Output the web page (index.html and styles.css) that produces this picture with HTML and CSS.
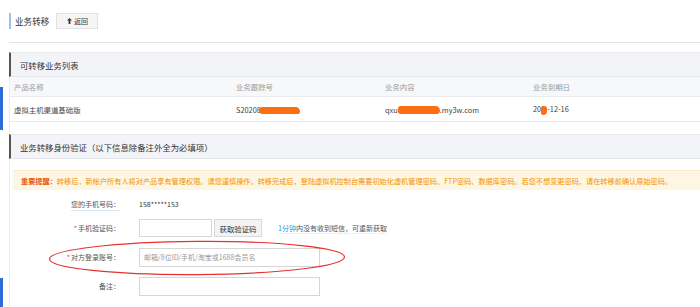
FILE: index.html
```html
<!DOCTYPE html>
<html>

<head>
    <meta charset="utf-8">
    <title>业务转移</title>
    <link rel="stylesheet" href="styles.css">
</head>

<body>
    <div class="layout">
        <div class="sidebar">
            <div class="nav-on nav-first"></div>
            <div class="nav-on nav-second"></div>
        </div>

        <div class="main">
            <!-- 页面标题 -->
            <div class="page-head">
                <span class="page-title">业务转移</span>
                <button class="back-btn">
                    <svg width="5" height="6" viewBox="0 0 5 6"><path d="M2.5 0 L5 2.6 L3.4 2.6 L3.4 6 L1.6 6 L1.6 2.6 L0 2.6 Z" fill="#333"/></svg>
                    返回
                </button>
            </div>

            <div class="content">
                <!-- 可转移业务列表 -->
                <div class="panel-title">可转移业务列表</div>
                <div class="biz-table">
                    <div class="biz-row biz-head">
                        <div>产品名称</div>
                        <div>业务跟踪号</div>
                        <div>业务内容</div>
                        <div>业务到期日</div>
                    </div>
                    <div class="biz-row">
                        <div>虚拟主机渠道基础版</div>
                        <div>S20208<span class="mask mask-id"></span></div>
                        <div>qxu<span class="mask mask-domain"></span>.my3w.com</div>
                        <div>20<span class="mask mask-date"></span>-12-16</div>
                    </div>
                </div>

                <!-- 身份验证 -->
                <div class="panel-title panel-second">业务转移身份验证（以下信息除备注外全为必填项）</div>
                <div class="notice">
                    <b>重要提醒：</b>转移后，新帐户所有人将对产品享有管理权限。请您谨慎操作。转移完成后，登陆虚拟机控制台需要初始化虚机管理密码、FTP密码、数据库密码。若您不想变更密码，请在转移前确认原始密码。
                </div>

                <div class="form">
                    <div class="form-row row-phone">
                        <label class="form-label"><span class="tip-line">您的手机号码：</span></label>
                        <span class="form-value">158*****153</span>
                    </div>
                    <div class="form-row">
                        <label class="form-label"><i class="req">*</i>手机验证码：</label>
                        <input class="form-input input-code" type="text">
                        <button class="code-btn">获取验证码</button>
                        <span class="code-tip"><em>1分钟</em>内没有收到短信，可重新获取</span>
                    </div>
                    <div class="form-row">
                        <label class="form-label"><i class="req">*</i>对方登录账号：</label>
                        <input class="form-input" type="text" placeholder="邮箱/8位ID/手机/淘宝或1688会员名">
                    </div>
                    <div class="form-row">
                        <label class="form-label">备注：</label>
                        <input class="form-input" type="text">
                    </div>
                </div>
            </div>
        </div>
    </div>

    <!-- 手绘红圈标注 -->
    <svg class="mark-circle" width="300" height="38" viewBox="0 0 300 38">
        <ellipse cx="149" cy="18" rx="147.5" ry="16.6" fill="none" stroke="#e63232" stroke-width="1.2" transform="rotate(-0.4 149 18)"/>
    </svg>
</body>

</html>
```

FILE: styles.css
```css
body {
    margin: 0;
    background: #fff;
    font-family: 'Noto Sans CJK SC', 'Noto Sans', sans-serif;
    color: #333;
    overflow: hidden;
}

.layout {
    display: flex;
    height: 307px;
}

.sidebar {
    width: 9px;
    flex-shrink: 0;
}

.nav-on {
    width: 3px;
    background-color: #2f6ad6;
}

.nav-first {
    margin-top: 87px;
    height: 43px;
}

.nav-second {
    margin-top: 148px;
    height: 29px;
}

.main {
    flex: 1;
}

.page-head {
    height: 43px;
    padding-top: 13px;
    box-sizing: border-box;
    border-bottom: 1px solid #e3e3e3;
    display: flex;
    align-items: flex-start;
}

.page-title {
    height: 16px;
    line-height: 16px;
    padding-left: 4px;
    border-left: 2px solid #9dbfe9;
    font-size: 8.6px;
    color: #333;
}

.back-btn {
    margin-left: 7px;
    width: 42px;
    height: 16px;
    padding: 0;
    display: flex;
    align-items: center;
    justify-content: center;
    gap: 2px;
    background-color: #f5f5f5;
    border: 1px solid #e2e2e2;
    font-family: inherit;
    font-size: 7px;
    color: #333;
}

.content {
    border-left: 1px solid #ececec;
    height: 263px;
}

.panel-title {
    margin-top: 9px;
    margin-left: -1px;
    height: 25px;
    line-height: 24px;
    padding-left: 9px;
    background-color: #f3f4f7;
    border-left: 2px solid #555;
    border-top: 1px solid #e9eaee;
    border-bottom: 1px solid #e4e5ea;
    box-sizing: border-box;
    font-size: 8.4px;
    color: #333;
}

.panel-second {
    margin-top: 12px;
}

.biz-row {
    display: grid;
    grid-template-columns: 222px 149px 148px 1fr;
    height: 24px;
    align-items: center;
    border-bottom: 1px solid #eaebef;
    font-size: 7.4px;
    color: #444;
}

.biz-row > div {
    padding-left: 4px;
}

.biz-head {
    height: 19px;
    background-color: #f7f8fa;
    color: #999;
}

.mask {
    display: inline-block;
    vertical-align: middle;
    background-color: #fb6e12;
    border-radius: 4px;
}

.mask-id {
    width: 41px;
    height: 7px;
    margin-left: -2px;
    border-radius: 4px 5px 3px 4px;
}

.mask-domain {
    width: 42px;
    height: 8px;
    border-radius: 3px 5px 4px 3px;
}

.mask-date {
    width: 6px;
    height: 9px;
    margin-top: 3px;
    border-radius: 2px 3px 4px 2px;
}

.notice {
    margin: 11px 0 0 3px;
    height: 20px;
    line-height: 20px;
    padding-left: 8px;
    background-color: #fdf6e2;
    border-top: 1px solid #fbedc9;
    box-sizing: border-box;
    font-size: 7.18px;
    color: #f39200;
    white-space: nowrap;
    overflow: hidden;
}

.notice b {
    color: #e8590c;
}

.form {
    padding-top: 4px;
}

.form-row {
    display: flex;
    align-items: center;
    height: 20px;
    margin-bottom: 9px;
    font-size: 7px;
}

.row-phone {
    margin-bottom: 4px;
}

.form-label {
    width: 110px;
    margin-right: 19px;
    text-align: right;
    color: #555;
}

.tip-line {
    border-bottom: 1px solid #dbe6f3;
    padding-bottom: 1px;
}

.req {
    font-style: normal;
    color: #e33;
    margin-right: 1px;
}

.form-value {
    color: #333;
}

.form-input {
    width: 181px;
    height: 19px;
    box-sizing: border-box;
    padding: 0 4px;
    border: 1px solid #d6d6d6;
    font-family: inherit;
    font-size: 7px;
    outline: none;
}

.form-input::placeholder {
    color: #9a9a9a;
}

.input-code {
    width: 73px;
    height: 18px;
}

.code-btn {
    margin-left: 2px;
    width: 48px;
    height: 18px;
    padding: 0;
    background-color: #f3f3f3;
    border: 1px solid #dadada;
    font-family: inherit;
    font-size: 7.4px;
    color: #333;
}

.code-tip {
    margin-left: 16px;
    color: #555;
    border-bottom: 1px solid #f0f0f0;
}

.code-tip em {
    font-style: normal;
    color: #1b9ae0;
}

.mark-circle {
    position: absolute;
    left: 48px;
    top: 240px;
}
```
